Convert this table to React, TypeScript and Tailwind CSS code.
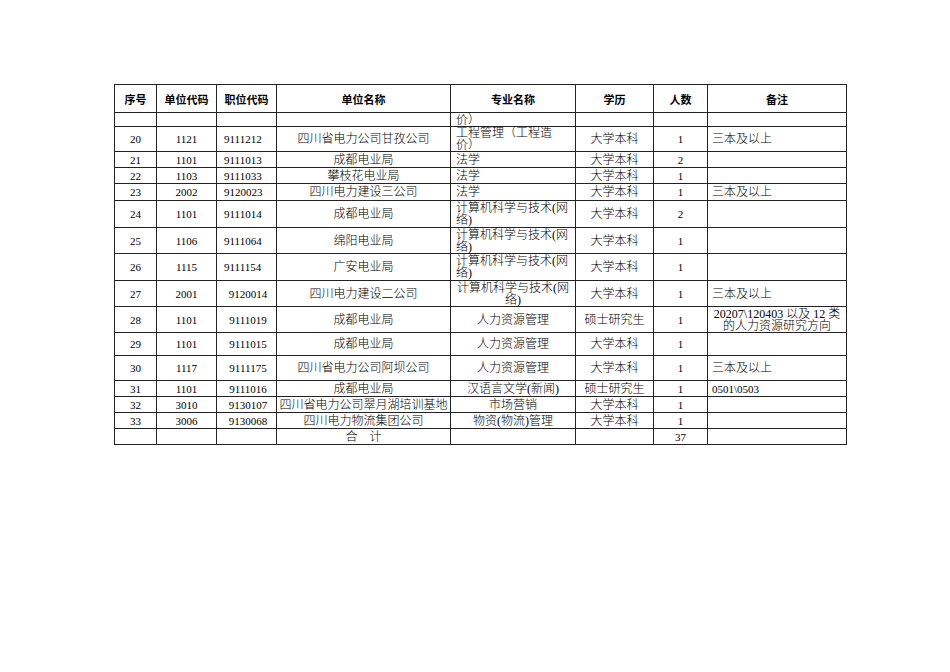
import React from 'react'

type Row = {
  h: number
  no: string
  unit: string
  pos: string
  posLeft?: boolean
  name: string
  major: string[]
  majorLeft?: boolean
  edu: string
  n: string
  note?: string[]
  noteCenter?: boolean
  noteNum?: boolean
}

const cs = ['计算机科学与技术(网', '络)']

const rows: Row[] = [
  { h: 14, no: '', unit: '', pos: '', name: '', major: ['价）'], majorLeft: true, edu: '', n: '' },
  { h: 25, no: '20', unit: '1121', pos: '9111212', posLeft: true, name: '四川省电力公司甘孜公司', major: ['工程管理（工程造', '价）'], majorLeft: true, edu: '大学本科', n: '1', note: ['三本及以上'] },
  { h: 16, no: '21', unit: '1101', pos: '9111013', posLeft: true, name: '成都电业局', major: ['法学'], majorLeft: true, edu: '大学本科', n: '2' },
  { h: 16, no: '22', unit: '1103', pos: '9111033', posLeft: true, name: '攀枝花电业局', major: ['法学'], majorLeft: true, edu: '大学本科', n: '1' },
  { h: 17, no: '23', unit: '2002', pos: '9120023', posLeft: true, name: '四川电力建设三公司', major: ['法学'], majorLeft: true, edu: '大学本科', n: '1', note: ['三本及以上'] },
  { h: 27, no: '24', unit: '1101', pos: '9111014', posLeft: true, name: '成都电业局', major: cs, majorLeft: true, edu: '大学本科', n: '2' },
  { h: 26, no: '25', unit: '1106', pos: '9111064', posLeft: true, name: '绵阳电业局', major: cs, majorLeft: true, edu: '大学本科', n: '1' },
  { h: 27, no: '26', unit: '1115', pos: '9111154', posLeft: true, name: '广安电业局', major: cs, majorLeft: true, edu: '大学本科', n: '1' },
  { h: 26, no: '27', unit: '2001', pos: '9120014', name: '四川电力建设二公司', major: cs, edu: '大学本科', n: '1', note: ['三本及以上'] },
  { h: 26, no: '28', unit: '1101', pos: '9111019', name: '成都电业局', major: ['人力资源管理'], edu: '硕士研究生', n: '1', note: ['20207\\120403 以及 12 类', '的人力资源研究方向'], noteCenter: true },
  { h: 23, no: '29', unit: '1101', pos: '9111015', name: '成都电业局', major: ['人力资源管理'], edu: '大学本科', n: '1' },
  { h: 25, no: '30', unit: '1117', pos: '9111175', name: '四川省电力公司阿坝公司', major: ['人力资源管理'], edu: '大学本科', n: '1', note: ['三本及以上'] },
  { h: 16, no: '31', unit: '1101', pos: '9111016', name: '成都电业局', major: ['汉语言文学(新闻)'], edu: '硕士研究生', n: '1', note: ['0501\\0503'], noteNum: true },
  { h: 16, no: '32', unit: '3010', pos: '9130107', name: '四川省电力公司翠月湖培训基地', major: ['市场营销'], edu: '大学本科', n: '1' },
  { h: 16, no: '33', unit: '3006', pos: '9130068', name: '四川电力物流集团公司', major: ['物资(物流)管理'], edu: '大学本科', n: '1' },
]

const headers = ['序号', '单位代码', '职位代码', '单位名称', '专业名称', '学历', '人数', '备注']
const widths = ['w-[42px]', 'w-[60px]', 'w-[60px]', 'w-[174px]', 'w-[125px]', 'w-[78px]', 'w-[54px]', 'w-[139px]']

const td = 'border border-[#222] p-0 align-middle leading-[12px]'
const num = 'text-[11px]'
const cjk = 'text-[12px] font-light'

const Lines = ({ lines }: { lines: string[] }) => (
  <>
    {lines.map((l, i) => (
      <div key={i} className="leading-[12px] whitespace-nowrap">
        {l}
      </div>
    ))}
  </>
)

const App = () => {
  return (
    <div className="min-h-[672px] w-[950px] bg-white pl-[114px] pt-[84px] text-black" style={{ fontFamily: '"Liberation Serif", "Noto Sans CJK SC", serif' }}>
      <table className="w-[733px] table-fixed border-collapse">
        <colgroup>
          {widths.map((w, i) => (
            <col key={i} className={w} />
          ))}
        </colgroup>
        <thead>
          {/* header row */}
          <tr className="h-[28px]">
            {headers.map((h) => (
              <th key={h} className={`${td} text-center text-[11px] font-bold`} style={{ fontFamily: '"Noto Sans CJK SC", sans-serif' }}>
                {h}
              </th>
            ))}
          </tr>
        </thead>
        <tbody>
          {rows.map((r, i) => (
            <tr key={i} style={{ height: r.h }}>
              <td className={`${td} ${num} text-center`}>{r.no}</td>
              <td className={`${td} ${num} text-center`}>{r.unit}</td>
              <td className={`${td} ${num} ${r.posLeft ? 'pl-[7px] text-left' : 'pl-[3px] text-center'}`}>{r.pos}</td>
              <td className={`${td} ${cjk} text-center`}>{r.name}</td>
              <td className={`${td} ${cjk} ${r.majorLeft ? 'pl-[5px] text-left' : 'text-center'}`}>
                <Lines lines={r.major} />
              </td>
              <td className={`${td} ${cjk} text-center`}>{r.edu}</td>
              <td className={`${td} ${num} text-center`}>{r.n}</td>
              <td className={`${td} ${r.noteNum ? num : cjk} ${r.noteCenter ? 'text-center' : 'pl-[4px] text-left'}`}>
                {r.note && <Lines lines={r.note} />}
              </td>
            </tr>
          ))}
          {/* total */}
          <tr className="h-[16px]">
            <td className={td}></td>
            <td className={td}></td>
            <td className={td}></td>
            <td className={`${td} ${cjk} text-center`}>合　计</td>
            <td className={td}></td>
            <td className={td}></td>
            <td className={`${td} ${num} text-center`}>37</td>
            <td className={td}></td>
          </tr>
        </tbody>
      </table>
    </div>
  )
}

export default App
